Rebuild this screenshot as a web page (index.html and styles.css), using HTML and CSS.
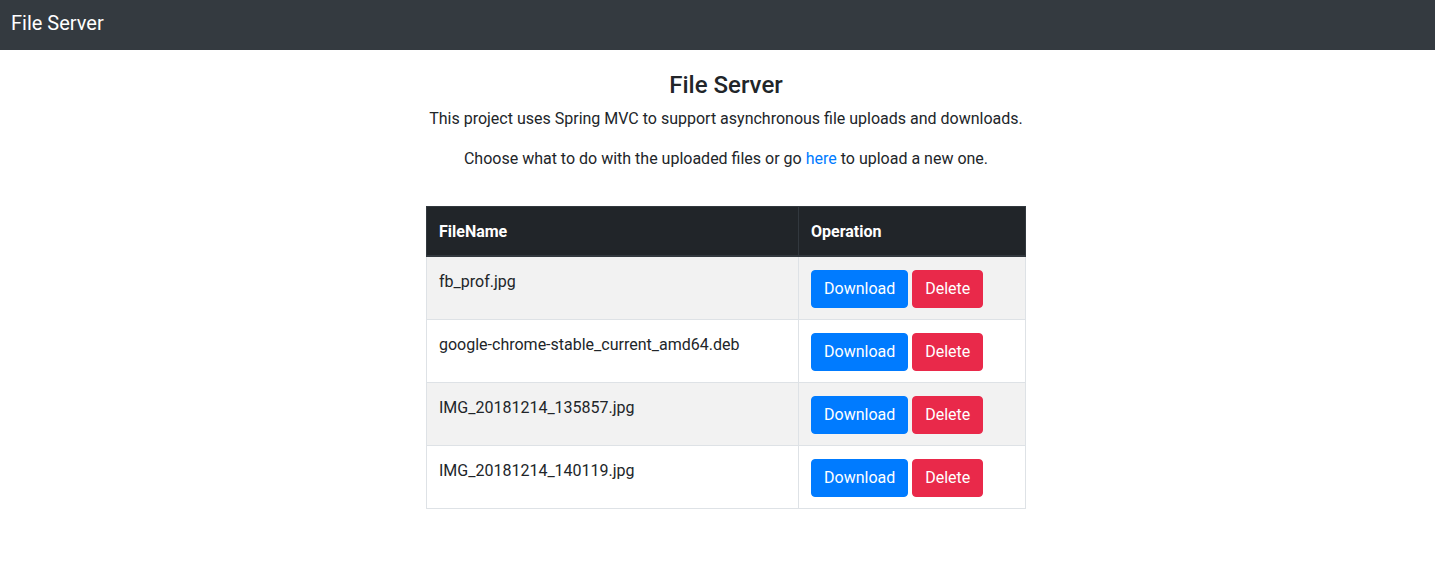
FILE: index.html
```html
<!DOCTYPE html>
<html lang="en">
<head>
<meta charset="utf-8">
<title>File Server</title>
<link rel="stylesheet" href="styles.css">
</head>
<body>
<nav class="navbar"><a class="brand" href="#">File Server</a></nav>
<div class="page">
  <main class="content">
    <h4 class="title">File Server</h4>
    <p>This project uses Spring MVC to support asynchronous file uploads and downloads.</p>
    <p>Choose what to do with the uploaded files or go <a class="link" href="#">here</a> to upload a new one.</p>
    <table class="files">
      <thead>
        <tr><th class="col-name">FileName</th><th>Operation</th></tr>
      </thead>
      <tbody>
        <tr><td>fb_prof.jpg</td><td><button class="btn btn-primary">Download</button> <button class="btn btn-danger">Delete</button></td></tr>
        <tr><td>google-chrome-stable_current_amd64.deb</td><td><button class="btn btn-primary">Download</button> <button class="btn btn-danger">Delete</button></td></tr>
        <tr><td>IMG_20181214_135857.jpg</td><td><button class="btn btn-primary">Download</button> <button class="btn btn-danger">Delete</button></td></tr>
        <tr><td>IMG_20181214_140119.jpg</td><td><button class="btn btn-primary">Download</button> <button class="btn btn-danger">Delete</button></td></tr>
      </tbody>
    </table>
  </main>
</div>
</body>
</html>
```
FILE: styles.css
```css
* { box-sizing: border-box; }
html, body { margin: 0; padding: 0; }
body {
  font-family: Roboto, "Liberation Sans", sans-serif;
  font-size: 16px;
  line-height: 1.5;
  color: #212529;
  background: #fff;
}
.navbar {
  background: #343a40;
  height: 50px;
  display: flex;
  align-items: center;
  padding: 0 11px 4px;
}
.brand {
  color: #fff;
  font-size: 20px;
  line-height: 30px;
  text-decoration: none;
}
.page {
  padding-left: 17px;
  padding-top: 21px;
}
.content {
  width: 600px;
  margin: 0 auto;
  text-align: center;
}
.title {
  font-size: 24px;
  font-weight: 500;
  line-height: 1.2;
  margin: 0 0 7px;
}
p { margin: 0 0 16px; }
.link { color: #007bff; text-decoration: none; }
.files {
  margin-top: 35px;
  width: 600px;
  border-collapse: collapse;
  text-align: left;
}
.files th, .files td {
  padding: 13px 12px 11px;
  vertical-align: top;
  border: 1px solid #dee2e6;
}
.files thead th {
  background: #212529;
  color: #fff;
  font-weight: 700;
  border-color: #32383e;
  border-bottom: 2px solid #32383e;
  vertical-align: bottom;
}
.col-name { width: 372px; }
.files tbody tr:nth-child(odd) { background: #f2f2f2; }
.btn {
  font-family: inherit;
  font-size: 16px;
  line-height: 24px;
  padding: 6px 12px;
  border: 1px solid transparent;
  border-radius: 4px;
  color: #fff;
  cursor: pointer;
  vertical-align: middle;
}
.btn-primary { background: #007bff; border-color: #007bff; }
.btn-danger { background: #e9294a; border-color: #e9294a; }
```
